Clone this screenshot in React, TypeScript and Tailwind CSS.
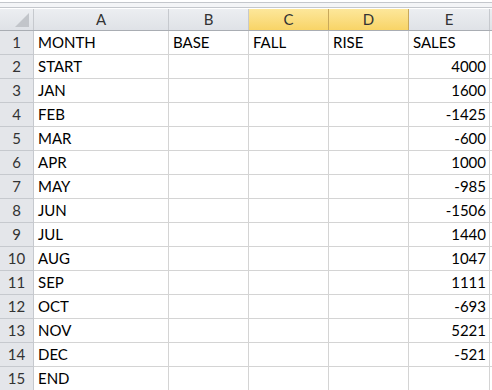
const rows: [string, string][] = [
  ["MONTH", ""],
  ["START", "4000"],
  ["JAN", "1600"],
  ["FEB", "-1425"],
  ["MAR", "-600"],
  ["APR", "1000"],
  ["MAY", "-985"],
  ["JUN", "-1506"],
  ["JUL", "1440"],
  ["AUG", "1047"],
  ["SEP", "1111"],
  ["OCT", "-693"],
  ["NOV", "5221"],
  ["DEC", "-521"],
  ["END", ""],
];

function ColHead({ label, w, selected }: { label: string; w: string; selected?: boolean }) {
  return (
    <div
      className={
        "flex items-center justify-center border-r text-[15px] " +
        w +
        (selected
          ? " bg-gradient-to-b from-[#fde79a] to-[#f8d466] border-[#c8a85a] text-[#333]"
          : " bg-gradient-to-b from-[#eceef1] to-[#dfe2e7] border-[#c6c9ce] text-[#333]")
      }
    >
      {label}
    </div>
  );
}

export default function App() {
  return (
    <div className="w-[492px] h-[390px] overflow-hidden bg-white font-['Lato','Open_Sans',sans-serif] text-black">
      {/* formula bar remnant */}
      <div className="h-[9px] bg-white border-t-[2px] border-t-white">
        <div className="h-[6px] border-t border-b border-[#c4c7cc] bg-[#f4f5f7]"></div>
      </div>
      {/* column headers */}
      <div className="flex h-[22px] border-b border-[#a9adb3]">
        <div className="relative w-[34px] border-r border-[#c6c9ce] bg-gradient-to-b from-[#eceef1] to-[#dfe2e7]">
          <svg className="absolute right-[4px] bottom-[3px]" width="14" height="14" viewBox="0 0 14 14">
            <polygon points="14,0 14,14 0,14" fill="#c2c5ca" />
          </svg>
        </div>
        <ColHead label="A" w="w-[135px]" />
        <ColHead label="B" w="w-[80px]" />
        <ColHead label="C" w="w-[80px]" selected />
        <ColHead label="D" w="w-[80px]" selected />
        <ColHead label="E" w="w-[81px]" />
        <div className="flex-1 bg-gradient-to-b from-[#eceef1] to-[#dfe2e7]"></div>
      </div>
      {rows.map(([m, s], i) => (
        <div key={i} className="flex h-[24px] text-[15px]">
          <div className="flex w-[34px] items-center justify-center border-r border-b border-[#c6c9ce] bg-[#e4e6ea] text-[#333]">
            {i + 1}
          </div>
          <div className="flex w-[135px] items-center border-r border-b border-[#d4d4d4] pl-[4px]">{m}</div>
          <div className="w-[80px] border-r border-b border-[#d4d4d4]">{i === 0 ? <span className="flex h-full items-center pl-[4px]">BASE</span> : null}</div>
          <div className="w-[80px] border-r border-b border-[#d4d4d4]">{i === 0 ? <span className="flex h-full items-center pl-[4px]">FALL</span> : null}</div>
          <div className="w-[80px] border-r border-b border-[#d4d4d4]">{i === 0 ? <span className="flex h-full items-center pl-[4px]">RISE</span> : null}</div>
          <div className={"flex w-[81px] items-center border-r border-b border-[#d4d4d4] " + (i === 0 ? "justify-start pl-[4px]" : "justify-end pr-[3px]")}>
            {i === 0 ? "SALES" : s}
          </div>
          <div className="flex-1 border-b border-[#d4d4d4]"></div>
        </div>
      ))}
    </div>
  );
}
